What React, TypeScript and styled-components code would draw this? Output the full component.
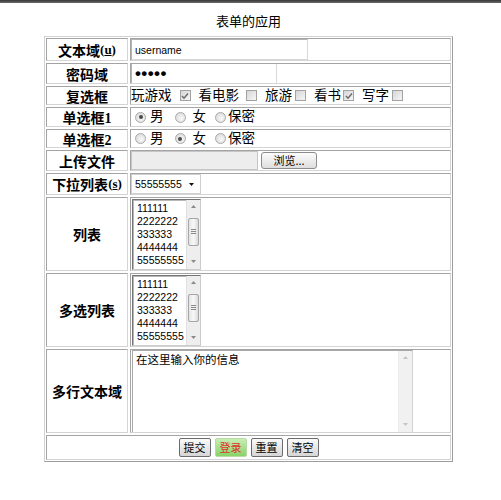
import React from 'react';
import styled, { createGlobalStyle } from 'styled-components';

const Global = createGlobalStyle`
  html, body { margin: 0; padding: 0; background: #fff; }
  body { font-family: "Liberation Sans", "Noto Sans CJK SC", sans-serif; color: #000; }
`;

const TopBar = styled.div`
  height: 3px;
  background: linear-gradient(#353535, #6c6c6c);
`;

const Page = styled.div`
  width: 409px;
  margin-left: 44px;
`;

const Title = styled.div`
  margin-top: 10px;
  height: 23px;
  font-family: "Noto Sans CJK SC", sans-serif;
  font-size: 13px;
  line-height: 16px;
  text-align: center;
`;

const FormGrid = styled.div`
  display: grid;
  grid-template-columns: 82px 321px;
  grid-template-rows: 23px 21px 19px 20px 19px 21px 22px 74px 74px 84px 25px;
  gap: 2px;
  padding: 1px;
  border: 1px solid;
  border-color: #d2d2d2 #9c9c9c #9c9c9c #d2d2d2;
`;

const Cell = styled.div`
  box-sizing: border-box;
  border: 1px solid;
  border-color: #a4a4a4 #d4d4d4 #d4d4d4 #a4a4a4;
  display: flex;
  align-items: center;
  min-width: 0;
  overflow: hidden;
`;

const LabelCell = styled(Cell)`
  justify-content: center;
  font-family: "Liberation Serif", "Noto Sans CJK SC", serif;
  font-weight: bold;
  font-size: 14px;
  white-space: nowrap;
`;

const Accel = styled.span`
  font-size: 13px;
  & u { text-decoration: underline; }
`;

const FieldCell = styled(Cell)`
  font-family: "Liberation Sans", "Noto Sans CJK SC", sans-serif;
  font-size: 13.5px;
  white-space: nowrap;
`;

const ButtonCell = styled(Cell)`
  grid-column: 1 / -1;
  justify-content: center;
  gap: 4px;
`;

const TextInput = styled.div<{ $w: number }>`
  box-sizing: border-box;
  width: ${(p) => p.$w}px;
  height: 21px;
  border: 1px solid;
  border-color: #b4b4b4 #d8d8d8 #d8d8d8 #b4b4b4;
  display: flex;
  align-items: center;
  padding-left: 3px;
  font-size: 10.5px;
  font-family: "Liberation Sans", sans-serif;
`;

const Dots = styled.span`
  font-family: "Liberation Sans", sans-serif;
  font-size: 17px;
  font-weight: bold;
  letter-spacing: 0.4px;
  line-height: 1;
`;

const Word = styled.span<{ $ml?: number }>`
  margin-left: ${(p) => p.$ml ?? 0}px;
  line-height: 16px;
`;

const Row = styled.div`
  display: flex;
  align-items: center;
`;

const Check = styled.span<{ $ml: number }>`
  box-sizing: border-box;
  width: 11px;
  height: 11px;
  margin-left: ${(p) => p.$ml}px;
  border: 1px solid #a2a2a2;
  background: linear-gradient(135deg, #d6d6d6, #f6f6f6);
  display: flex;
  align-items: center;
  justify-content: center;
`;

const Radio = styled.span<{ $ml: number; $on?: boolean }>`
  box-sizing: border-box;
  width: 11px;
  height: 11px;
  margin-left: ${(p) => p.$ml}px;
  border-radius: 50%;
  border: 1px solid #a8a8a8;
  background: radial-gradient(circle at 60% 60%, #f8f8f8, #d4d4d4);
  display: flex;
  align-items: center;
  justify-content: center;
  &::after {
    content: '';
    display: ${(p) => (p.$on ? 'block' : 'none')};
    width: 4px;
    height: 4px;
    border-radius: 50%;
    background: #4a4a4a;
  }
`;

const FileBox = styled.div`
  box-sizing: border-box;
  width: 127px;
  height: 19px;
  background: #ededed;
  border: 1px solid #c6c6c6;
`;

const BrowseButton = styled.div`
  box-sizing: border-box;
  width: 56px;
  height: 17px;
  margin-left: 3px;
  border: 1px solid #8c8c8c;
  border-radius: 3px;
  background: linear-gradient(#fbfbfb, #dedede);
  font-size: 11px;
  line-height: 15px;
  text-align: center;
  font-family: "Noto Sans CJK SC", sans-serif;
`;

const Select = styled.div`
  box-sizing: border-box;
  width: 70px;
  height: 20px;
  border: 1px solid #cfcfcf;
  display: flex;
  align-items: center;
  justify-content: space-between;
  padding: 0 6px 0 3px;
  font-size: 10.5px;
  font-family: "Liberation Sans", sans-serif;
`;

const ListBox = styled.div`
  box-sizing: border-box;
  width: 69px;
  height: 71px;
  margin-left: 1px;
  border: 1px solid;
  border-color: #747474 #cccccc #cccccc #747474;
  box-shadow: inset 1px 1px 0 #b8b8b8;
  display: flex;
  background: #fff;
`;

const ListItems = styled.div`
  flex: 1;
  padding: 2px 0 0 4px;
  font-size: 10.5px;
  line-height: 13px;
  font-family: "Liberation Sans", sans-serif;
  overflow: hidden;
`;

const ScrollBar = styled.div<{ $faint?: boolean }>`
  width: 13px;
  display: flex;
  flex-direction: column;
  background: ${(p) => (p.$faint ? '#f1f1f1' : '#eeeeee')};
  border-left: 1px solid ${(p) => (p.$faint ? '#ececec' : '#e0e0e0')};
`;

const ScrollArrow = styled.div`
  height: 14px;
  display: flex;
  align-items: center;
  justify-content: center;
`;

const ScrollTrack = styled.div`
  flex: 1;
  padding-top: 4px;
`;

const Thumb = styled.div`
  box-sizing: border-box;
  height: 28px;
  margin: 0 1px;
  border: 1px solid #a6a6a6;
  border-radius: 2px;
  background: linear-gradient(90deg, #e4e4e4, #f8f8f8, #dadada);
  display: flex;
  align-items: center;
  justify-content: center;
`;

const TextArea = styled.div`
  box-sizing: border-box;
  width: 281px;
  height: 83px;
  margin-left: 1px;
  border: 1px solid;
  border-color: #a8a8a8 #d2d2d2 #d2d2d2 #a8a8a8;
  display: flex;
`;

const TextAreaBody = styled.div`
  flex: 1;
  padding: 1px 0 0 3px;
  font-family: "Noto Sans CJK SC", sans-serif;
  font-size: 11.5px;
  line-height: 15px;
`;

const Btn = styled.div<{ $green?: boolean }>`
  box-sizing: border-box;
  height: 19px;
  padding: 0 4px;
  border: 1px solid ${(p) => (p.$green ? '#b6dca4' : '#6c6c6c')};
  border-radius: 2px;
  background: ${(p) =>
    p.$green ? 'linear-gradient(#c8eeb4, #86d468)' : 'linear-gradient(#fafafa, #d6d6d6)'};
  color: ${(p) => (p.$green ? '#e0302c' : '#000')};
  font-family: "Noto Sans CJK SC", sans-serif;
  font-size: 11px;
  line-height: 17px;
  text-align: center;
`;

const Tick = () => (
  <svg width="8" height="8" viewBox="0 0 8 8">
    <path d="M1 4 L3 6.2 L7 1.5" fill="none" stroke="#6a6a6a" strokeWidth="1.4" />
  </svg>
);

const Tri = ({ up, color }: { up?: boolean; color: string }) => (
  <svg width="5" height="3" viewBox="0 0 5 3">
    <path d={up ? 'M0 3 L2.5 0 L5 3 Z' : 'M0 0 L5 0 L2.5 3 Z'} fill={color} />
  </svg>
);

const Grip = () => (
  <svg width="5" height="5" viewBox="0 0 5 5">
    <path d="M0 0.5 H5 M0 2.5 H5 M0 4.5 H5" stroke="#8a8a8a" strokeWidth="1" />
  </svg>
);

const listValues = ['111111', '2222222', '333333', '4444444', '55555555'];

const List = () => (
  <ListBox>
    <ListItems>
      {listValues.map((v) => (
        <div key={v}>{v}</div>
      ))}
    </ListItems>
    <ScrollBar>
      <ScrollArrow>
        <Tri up color="#8a8a8a" />
      </ScrollArrow>
      <ScrollTrack>
        <Thumb>
          <Grip />
        </Thumb>
      </ScrollTrack>
      <ScrollArrow>
        <Tri color="#8a8a8a" />
      </ScrollArrow>
    </ScrollBar>
  </ListBox>
);

const RadioRow = ({ first }: { first: boolean }) => (
  <Row>
    <Radio $ml={4} $on={first} />
    <Word $ml={4}>男</Word>
    <Radio $ml={11} $on={!first} />
    <Word $ml={7}>女</Word>
    <Radio $ml={9} />
    <Word $ml={2}>保密</Word>
  </Row>
);

export default function App() {
  return (
    <>
      <Global />
      <TopBar />
      <Page>
        <Title>表单的应用</Title>
        <FormGrid>
          <LabelCell>
            文本域
            <Accel>
              (<u>u</u>)
            </Accel>
          </LabelCell>
          <FieldCell>
            <TextInput $w={177}>username</TextInput>
          </FieldCell>

          <LabelCell>密码域</LabelCell>
          <FieldCell>
            <TextInput $w={146}>
              <Dots>•••••</Dots>
            </TextInput>
          </FieldCell>

          <LabelCell>复选框</LabelCell>
          <FieldCell>
            <Row>
              <Word>玩游戏</Word>
              <Check $ml={8}>
                <Tick />
              </Check>
              <Word $ml={8}>看电影</Word>
              <Check $ml={7} />
              <Word $ml={8}>旅游</Word>
              <Check $ml={3} />
              <Word $ml={8}>看书</Word>
              <Check $ml={2}>
                <Tick />
              </Check>
              <Word $ml={8}>写字</Word>
              <Check $ml={3} />
            </Row>
          </FieldCell>

          <LabelCell>单选框1</LabelCell>
          <FieldCell>
            <RadioRow first />
          </FieldCell>

          <LabelCell>单选框2</LabelCell>
          <FieldCell>
            <RadioRow first={false} />
          </FieldCell>

          <LabelCell>上传文件</LabelCell>
          <FieldCell>
            <FileBox />
            <BrowseButton>浏览...</BrowseButton>
          </FieldCell>

          <LabelCell>
            下拉列表
            <Accel>
              (<u>s</u>)
            </Accel>
          </LabelCell>
          <FieldCell>
            <Select>
              <span>55555555</span>
              <Tri color="#111" />
            </Select>
          </FieldCell>

          <LabelCell>列表</LabelCell>
          <FieldCell>
            <List />
          </FieldCell>

          <LabelCell>多选列表</LabelCell>
          <FieldCell>
            <List />
          </FieldCell>

          <LabelCell>多行文本域</LabelCell>
          <FieldCell>
            <TextArea>
              <TextAreaBody>在这里输入你的信息</TextAreaBody>
              <ScrollBar $faint>
                <ScrollArrow>
                  <Tri up color="#c4c4c4" />
                </ScrollArrow>
                <ScrollTrack />
                <ScrollArrow>
                  <Tri color="#c4c4c4" />
                </ScrollArrow>
              </ScrollBar>
            </TextArea>
          </FieldCell>

          <ButtonCell>
            <Btn>提交</Btn>
            <Btn $green>登录</Btn>
            <Btn>重置</Btn>
            <Btn>清空</Btn>
          </ButtonCell>
        </FormGrid>
      </Page>
    </>
  );
}
